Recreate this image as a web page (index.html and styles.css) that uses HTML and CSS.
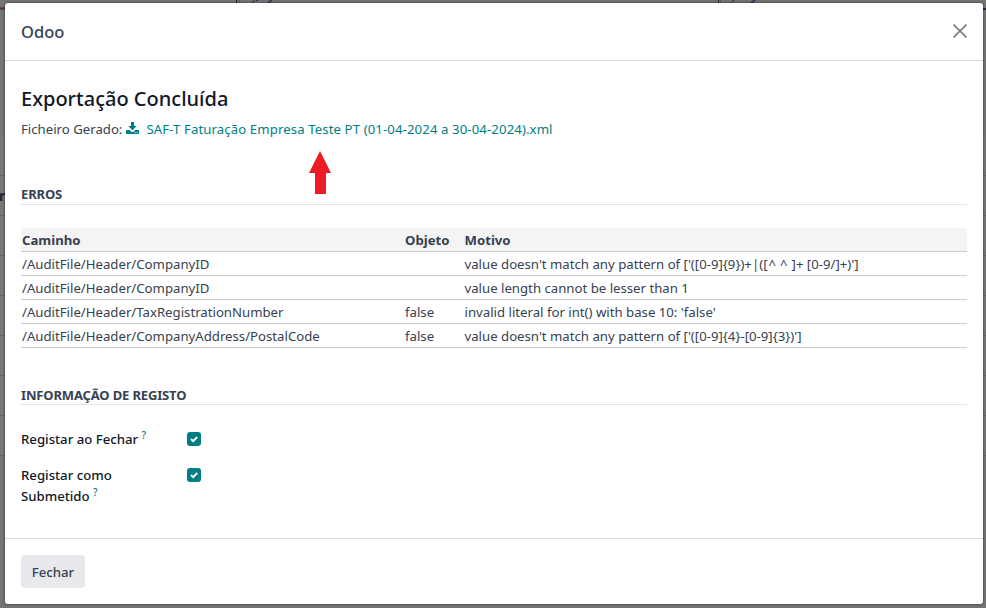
FILE: index.html
```html
<!DOCTYPE html>
<html lang="pt">
<head>
<meta charset="utf-8">
<title>Odoo</title>
<link rel="stylesheet" href="styles.css">
</head>
<body>
<div class="backdrop">
  <div class="peek peek-top" aria-hidden="true">
    <svg width="986" height="10" viewBox="0 0 986 10"><path d="M0 8.500H6" stroke="#5b3038" stroke-width="2"/><path d="M983 9H986" stroke="#29293f" stroke-width="2"/><path d="M236.500 0V3M718.500 0V3" stroke="#26262f"/><path d="M239.500 0V3M720.500 0V3" stroke="#6b5048"/><path d="M252 2.500l3-2M256 .5h2M731 3l3-3" stroke="#2b2f42"/><path d="M268 3l4-3M751 3l4-3" stroke="#2c3d5d" stroke-width="2"/></svg>
  </div>
  <span class="peek peek-label" aria-hidden="true">r</span>
  <main class="modal">
    <header class="modal-header">
      <h4 class="modal-title">Odoo</h4>
      <button class="close" aria-label="Fechar"><svg width="14" height="14" viewBox="0 0 14 14"><path d="M.5 .5L13.500 13.500M13.500 .5L.5 13.500" stroke="#7d7d7d" stroke-width="1.700"/></svg></button>
    </header>
    <section class="modal-body">
      <h2 class="heading">Exportação Concluída</h2>
      <p class="file"><span class="file-label">Ficheiro Gerado:</span><svg class="download" width="13" height="12" viewBox="0 0 13 12"><path fill="#017e84" d="M5 0h3v4h2.800L6.500 8.200 2.200 4H5zM.6 8h3.100l1.500 1.400c.8.700 1.800.7 2.600 0L9.300 8h3.100q.6 0 .6.600v2.800q0 .6-.6.600H.6q-.6 0-.6-.6V8.600Q0 8 .6 8z"/><path fill="#fff" d="M8.700 10h1v1h-1zM10.700 10h1v1h-1z"/></svg><a class="file-link">SAF-T Faturação Empresa Teste PT (01-04-2024 a 30-04-2024).xml</a>
        <svg class="arrow" width="22" height="43" viewBox="0 0 22 43"><path fill="#ed1c24" d="M11 0L22 22H17V43H6V22H0z"/></svg>
      </p>
      <h3 class="section section-errors">ERROS</h3>
      <table class="errors">
        <colgroup><col class="c1"><col class="c2"><col></colgroup>
        <thead><tr><th>Caminho</th><th>Objeto</th><th>Motivo</th></tr></thead>
        <tbody>
          <tr><td>/AuditFile/Header/CompanyID</td><td></td><td>value doesn't match any pattern of ['([0-9]{9})+|([<span class="carets">^^</span>]+ [0-9/]+)']</td></tr>
          <tr><td>/AuditFile/Header/CompanyID</td><td></td><td>value length cannot be lesser than 1</td></tr>
          <tr><td>/AuditFile/Header/TaxRegistrationNumber</td><td>false</td><td>invalid literal for int() with base 10: 'false'</td></tr>
          <tr><td>/AuditFile/Header/CompanyAddress/PostalCode</td><td>false</td><td>value doesn't match any pattern of ['([0-9]{4}-[0-9]{3})']</td></tr>
        </tbody>
      </table>
      <h3 class="section section-info">INFORMAÇÃO DE REGISTO</h3>
      <div class="fields">
        <label class="label">Registar ao Fechar <sup>?</sup></label>
        <span class="check"><svg width="14" height="14" viewBox="0 0 14 14"><path d="M4 7l2.200 2.200L10.200 5" fill="none" stroke="#fff" stroke-width="1.900"/></svg></span>
        <label class="label">Registar como<br>Submetido <sup>?</sup></label>
        <span class="check"><svg width="14" height="14" viewBox="0 0 14 14"><path d="M4 7l2.200 2.200L10.200 5" fill="none" stroke="#fff" stroke-width="1.900"/></svg></span>
      </div>
    </section>
    <footer class="modal-footer"><button class="btn">Fechar</button></footer>
  </main>
</div>
</body>
</html>
```
FILE: styles.css
```css
* { box-sizing: border-box; }
body { margin: 0; font: 13.2px/21px "Noto Sans", "Open Sans", sans-serif; color: #374151; }
h2, h3, h4, p { margin: 0; }
.backdrop { position: relative; width: 986px; height: 608px; padding: 3px 3px 4px 5px; overflow: hidden; background: repeating-linear-gradient(#777978 0 39px, #656666 39px 40px) 0 136px / 100% 320px no-repeat, #747675; }
.peek { position: absolute; left: 0; top: 0; line-height: 1; }
.peek-top svg { display: block; }
.peek-label { top: 189px; left: -1px; font-size: 14px; font-weight: 700; color: #222530; }
.modal { position: relative; display: flex; flex-direction: column; width: 978px; height: 601px; background: #fff; border-radius: 3px; box-shadow: 0 0 3px #0009; }
.modal-header { display: flex; align-items: center; justify-content: space-between; height: 58px; padding: 0 16px; border-bottom: 1px solid #d8dadd; }
.modal-title { font-size: 16.500px; font-weight: 500; color: #374151; }
.close { display: flex; padding: 0 0 2px; border: 0; background: none; }
.modal-body { flex: 1; padding: 25px 16px 0; }
.heading { font-size: 20px; line-height: 26px; font-weight: 500; color: #111827; }
.file { position: relative; display: flex; align-items: center; height: 21px; margin-top: 6px; white-space: nowrap; }
.file-label, .file-link { padding-top: 2px; }
.download { margin: 0 7px 2px 4px; }
.file-link { color: #017e84; letter-spacing: .1px; }
.arrow { position: absolute; left: 288px; top: 33px; }
.section { height: 21px; font-size: 13px; line-height: 20px; font-weight: 700; letter-spacing: -.15px; border-bottom: 1px solid #e1e3e6; white-space: nowrap; }
.section-errors { margin-top: 45px; }
.errors { width: 946px; margin-top: 23px; table-layout: fixed; border-collapse: separate; border-spacing: 0; text-align: left; white-space: nowrap; }
.c1 { width: 383px; }
.c2 { width: 59.500px; }
.errors th, .errors td { height: 24px; padding: 1px 1px 0; line-height: 22px; border-bottom: 1px solid #c9cbce; }
.errors thead { background: #f4f4f4; }
.carets { margin-left: 1px; letter-spacing: 4px; }
.section-info { margin-top: 36px; line-height: 22px; }
.fields { display: grid; grid-template-columns: 166px 14px; row-gap: 15px; margin-top: 24px; }
.label { font-weight: 500; color: #111827; white-space: nowrap; }
.label sup { font-size: 10px; line-height: 0; color: #017e84; }
.check { width: 14px; height: 14px; margin-top: 3px; border-radius: 3px; background: #017e84; }
.check svg { display: block; }
.modal-footer { height: 66px; padding: 16px; border-top: 1px solid #d8dadd; }
.btn { width: 64px; height: 33px; padding: 0; border: 0; border-radius: 4px; background: #e7e9ed; color: #374151; font: 500 13.200px "Noto Sans", sans-serif; }
```
